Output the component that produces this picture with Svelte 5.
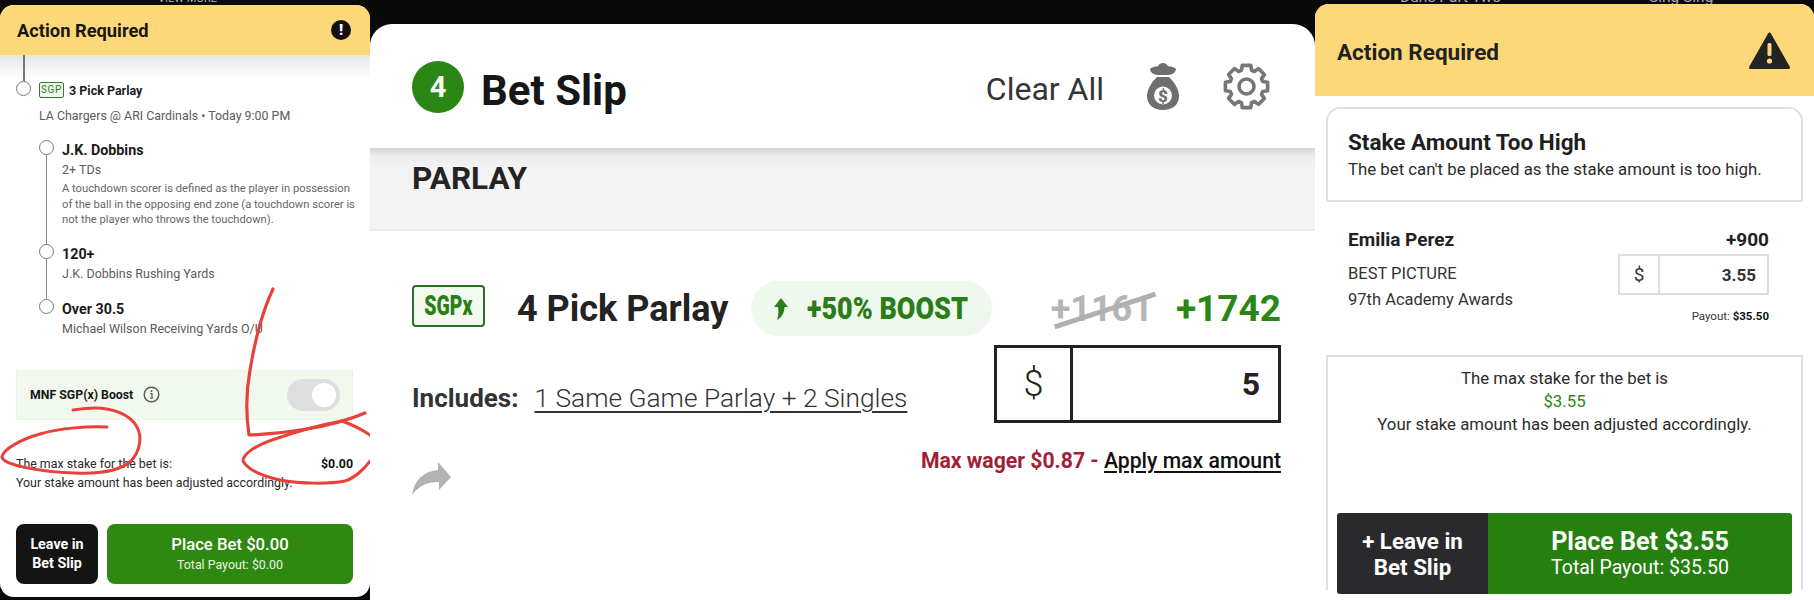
<script>
  const teeth = 8;
  function gearPath() {
    const cx = 23.5, cy = 23.5, ro = 21.5, ri = 17;
    const pts = [];
    for (let i = 0; i < teeth; i++) {
      const a = (i * 2 * Math.PI) / teeth - Math.PI / 2;
      const w = 0.2, s = 0.3;
      const seq = [[ri, a - s], [ro, a - w], [ro, a + w], [ri, a + s]];
      for (const [r, t] of seq) pts.push(`${(cx + r * Math.cos(t)).toFixed(1)} ${(cy + r * Math.sin(t)).toFixed(1)}`);
    }
    return 'M' + pts.join('L') + 'Z';
  }
  const gear = gearPath();
</script>

<div class="page">
  <section class="col left">
    <div class="peek"><span class="peek-a">VIEW MORE</span></div>
    <div class="sheet">
      <header class="alert-head small">
        <h2>Action Required</h2>
        <span class="bang">!</span>
      </header>
      <div class="fade"></div>
      <div class="parlay-row">
        <span class="dot"></span>
        <span class="sgp">SGP</span>
        <strong>3 Pick Parlay</strong>
      </div>
      <p class="matchup">LA Chargers @ ARI Cardinals • Today 9:00 PM</p>
      <div class="legs">
        <div class="leg">
          <div class="rail"><span class="dot"></span></div>
          <div>
            <h3>J.K. Dobbins</h3>
            <p class="leg-sub">2+ TDs</p>
            <p class="leg-desc">A touchdown scorer is defined as the player in possession of the ball in the opposing end zone (a touchdown scorer is not the player who throws the touchdown).</p>
          </div>
        </div>
        <div class="leg">
          <div class="rail"><span class="dot"></span></div>
          <div>
            <h3>120+</h3>
            <p class="leg-sub">J.K. Dobbins Rushing Yards</p>
          </div>
        </div>
        <div class="leg">
          <div class="rail"><span class="dot"></span></div>
          <div>
            <h3>Over 30.5</h3>
            <p class="leg-sub">Michael Wilson Receiving Yards O/U</p>
          </div>
        </div>
      </div>
      <div class="boost-box">
        <strong>MNF SGP(x) Boost</strong>
        <svg class="info" width="17" height="17" viewBox="0 0 17 17">
          <circle cx="8.5" cy="8.5" r="7.3" fill="none" stroke="#555" stroke-width="1.4" />
          <circle cx="8.5" cy="5.2" r="1" fill="#555" />
          <path d="M7.3 7.6h1.7v4.4M7.2 12.2h2.8" fill="none" stroke="#555" stroke-width="1.2" />
        </svg>
        <span class="toggle"><span class="knob"></span></span>
      </div>
      <div class="max-text">
        <p class="max-row"><span>The max stake for the bet is:</span><strong>$0.00</strong></p>
        <p>Your stake amount has been adjusted accordingly.</p>
      </div>
      <div class="left-buttons">
        <button class="leave-l">Leave in<br />Bet Slip</button>
        <button class="place-l"><b>Place Bet $0.00</b><span>Total Payout: $0.00</span></button>
      </div>
      <svg class="scribble" width="370" height="600" viewBox="0 0 370 600" aria-hidden="true">
        <g fill="none" stroke="#e8403a" stroke-linecap="round" stroke-linejoin="round">
          <path stroke-width="3" d="M107 427C90 426 60 428 40 434C22 439 3 449 2 457C3 465 40 472 75 473C100 474 120 470 130 462C141 451 142 436 137 427C130 414 112 408 95 408C88 408 80 409 73 410" />
          <path stroke-width="3.2" d="M273 289C262 312 255 340 250 370C246 392 246 415 249 435C280 434 330 428 365 413" />
          <path stroke-width="3" d="M370 435C360 428 350 424 342 421C325 424 295 432 272 440C255 446 243 454 243 461C248 470 262 476 280 480C300 484 330 484 345 481C355 478 365 468 370 461" />
        </g>
      </svg>
    </div>
  </section>

  <section class="center">
    <header class="slip-head">
      <span class="count">4</span>
      <h1>Bet Slip</h1>
      <span class="clear">Clear All</span>
      <svg class="bag" width="32" height="47" viewBox="0 0 32 47">
        <path fill="#6e6e6e" d="M3 6C6 3 9 4 11 3C13 -1 19 -1 21 3C23 4 26 3 29 6C29 9 25 12 21 12H11C7 12 3 9 3 6Z" />
        <path fill="#6e6e6e" d="M10 14H22C27 19 32 26 32 33C32 42 25 47 16 47C7 47 0 42 0 33C0 26 5 19 10 14Z" />
        <circle cx="16" cy="32.500" r="9" fill="#fff" />
        <text x="16" y="38.500" text-anchor="middle" class="bag-dollar">$</text>
      </svg>
      <svg class="gear" width="47" height="47" viewBox="0 0 47 47">
        <path d={gear} fill="none" stroke="#777" stroke-width="3.6" stroke-linejoin="round" />
        <circle cx="23.500" cy="23.500" r="7.500" fill="none" stroke="#777" stroke-width="3.600" />
      </svg>
    </header>
    <div class="band"><h2>PARLAY</h2></div>
    <div class="slip-body">
      <div class="pick-row">
        <span class="sgpx"><span>SGPx</span></span>
        <h3>4 Pick Parlay</h3>
        <span class="pill">
          <svg width="15" height="22" viewBox="0 0 15 22">
            <path fill="#2a7d18" d="M8 0L15 9H11.500C11.500 14 9.500 19 4 22C6 17 5.500 12 5 9H1Z" />
          </svg>
          <span class="pill-text">+50% BOOST</span>
        </span>
        <span class="old-odds">+1161</span>
        <span class="new-odds">+1742</span>
      </div>
      <div class="includes-row">
        <p class="includes"><strong>Includes:</strong><u>1 Same Game Parlay + 2 Singles</u></p>
        <div class="stake">
          <span class="cur">$</span>
          <span class="val">5</span>
        </div>
      </div>
      <div class="wager-row">
        <svg width="39" height="33" viewBox="0 0 39 33">
          <path fill="#b3b3b3" d="M39 15L26 0V8C12 9 2 18 0 33C7 24 14 20 27 20V28Z" />
        </svg>
        <p class="wager">Max wager $0.87 - <u>Apply max amount</u></p>
      </div>
    </div>
  </section>

  <section class="col right">
    <div class="peek tall"><span class="peek-b">Dune Part Two</span><span class="peek-c">Sing Sing</span></div>
    <div class="sheet flat">
      <header class="alert-head large">
        <h2>Action Required</h2>
        <svg width="41" height="37" viewBox="0 0 41 37">
          <path fill="#232323" stroke="#232323" stroke-width="3" stroke-linejoin="round" d="M20.500 2L39.500 35.500H1.500Z" />
          <rect x="18.500" y="11" width="4" height="13" rx="1.500" fill="#fdd878" />
          <circle cx="20.500" cy="29" r="2.600" fill="#fdd878" />
        </svg>
      </header>
      <div class="too-high">
        <h3>Stake Amount Too High</h3>
        <p>The bet can't be placed as the stake amount is too high.</p>
      </div>
      <div class="bet">
        <div class="bet-top"><strong>Emilia Perez</strong><strong>+900</strong></div>
        <div class="bet-mid">
          <div class="bet-info">
            <p>BEST PICTURE</p>
            <p>97th Academy Awards</p>
          </div>
          <div class="mini-stake"><span class="mini-cur">$</span><span class="mini-val">3.55</span></div>
        </div>
        <p class="payout">Payout: <b>$35.50</b></p>
      </div>
      <div class="max-card">
        <p>The max stake for the bet is</p>
        <p class="green">$3.55</p>
        <p>Your stake amount has been adjusted accordingly.</p>
        <div class="right-buttons">
          <button class="leave-r">+ Leave in<br />Bet Slip</button>
          <button class="place-r"><b>Place Bet $3.55</b><span>Total Payout: $35.50</span></button>
        </div>
      </div>
    </div>
  </section>
</div>

<style>
  :global(body) { margin: 0; background: #0a0a0a; }
  * { box-sizing: border-box; }
  p, h1, h2, h3 { margin: 0; }
  .page {
    display: flex;
    width: 1814px;
    height: 600px;
    overflow: hidden;
    background: #0a0a0a;
    font-family: Roboto, "Liberation Sans", sans-serif;
    color: #1c1c1c;
  }
  .col { display: flex; flex-direction: column; flex: none; }
  .left { width: 370px; }
  .right { width: 499px; }
  .center {
    width: 945px;
    flex: none;
    margin-top: 24px;
    background: #fff;
    border-radius: 22px 22px 0 0;
    overflow: hidden;
  }
  .peek { height: 5px; overflow: hidden; color: #b0b0b0; font-size: 11px; white-space: nowrap; }
  .peek.tall { height: 4px; font-size: 15.500px; line-height: 18px; color: #a8a8a8; }
  .peek-a { display: block; margin: -8px 0 0 158px; line-height: 13px; }
  .peek-b, .peek-c { display: inline-block; margin-top: -12px; vertical-align: top; }
  .peek-b { margin-left: 85px; }
  .peek-c { margin-left: 148px; }
  .sheet {
    position: relative;
    background: #fff;
    border-radius: 14px;
    height: 592px;
    overflow: hidden;
  }
  .sheet.flat { flex: 1; height: auto; border-radius: 14px 14px 0 0; }

  .alert-head {
    display: flex;
    align-items: center;
    justify-content: space-between;
    background: #fdd878;
  }
  .alert-head.small { height: 50px; padding: 0 19px 0 17px; }
  .alert-head.small h2 { font-size: 18.300px; font-weight: 700; color: #161616; }
  .alert-head.large { height: 92px; padding: 0 24px 0 22px; }
  .alert-head.large h2 { font-size: 22.500px; font-weight: 700; color: #222; margin-top: 3px; }
  .bang {
    width: 20px; height: 20px; border-radius: 50%;
    background: #111; color: #fff;
    display: flex; align-items: center; justify-content: center;
    font-size: 15px; font-weight: 900;
  }
  .fade {
    height: 24px;
    margin-bottom: -24px;
    background: linear-gradient(#e6e6e6, #fff);
  }
  .dot {
    display: block;
    width: 15px; height: 15px; border-radius: 50%;
    border: 1.4px solid #777; background: #fff;
    position: relative;
    flex: none;
  }
  .parlay-row {
    position: relative;
    display: flex;
    align-items: center;
    height: 18px;
    margin-top: 26px;
    padding-left: 16px;
    font-size: 12.500px;
  }
  .parlay-row::before {
    content: "";
    position: absolute;
    left: 23px; top: -26px;
    width: 1.500px; height: 26px;
    background: #777;
  }
  .parlay-row .dot { margin-top: -4px; }
  .sgp {
    margin-left: 8px; width: 25px; height: 16px;
    border: 1px solid #3a7a30; background: #f3faf0; border-radius: 2px;
    color: #2f7a22; font-size: 10px; line-height: 14px; text-align: center;
    letter-spacing: .7px;
    margin-right: 5px;
  }
  .matchup { margin: 9px 0 0 39px; font-size: 12.400px; line-height: 16px; color: #5b5b5b; }
  .legs { margin: 16px 16px 0 39px; display: flex; flex-direction: column; gap: 17px; }
  .leg { display: grid; grid-template-columns: 15px 1fr; column-gap: 8px; position: relative; }
  .leg:not(:last-child) .rail::after {
    content: "";
    position: absolute;
    left: 6.500px; top: 8px; bottom: -20px;
    width: 1.500px;
    background: #8a8a8a;
  }
  .rail .dot { z-index: 1; }
  .leg h3 { font-size: 14.300px; line-height: 18px; font-weight: 700; color: #1b1b1b; margin-top: 1px; }
  .leg-sub { font-size: 12.500px; line-height: 16px; margin-top: 3px; color: #5b5b5b; }
  .leg-desc { font-size: 11.200px; line-height: 15.500px; margin-top: 3px; color: #666; width: 296px; }
  .leg:nth-child(2) { margin-top: -1px; }
  .boost-box {
    position: relative;
    display: flex; align-items: center;
    width: 337px; height: 50px;
    margin: 33px 0 0 16px;
    padding: 0 12px 0 13px;
    background: #f1f9ee;
    font-size: 12.300px;
    border: 1px solid #eaf4e6;
  }
  .boost-box strong { font-weight: 700; color: #161616; }
  .info { margin-left: 10px; }
  .toggle {
    margin-left: auto; width: 53px; height: 32px; border-radius: 16px;
    background: #dedede; display: flex; align-items: center; justify-content: flex-end;
    padding-right: 4px;
  }
  .knob { width: 24px; height: 24px; border-radius: 50%; background: #fff; }
  .max-text {
    margin: 34px 17px 0 16px;
    font-size: 12.400px; line-height: 19px; color: #2a2a2a;
  }
  .max-row { display: flex; justify-content: space-between; }
  .max-row strong { color: #111; font-weight: 700; }
  .left-buttons { display: flex; gap: 9px; margin: 32px 17px 0 16px; height: 60px; }
  button { border: 0; color: #fff; font-family: inherit; padding: 0; }
  .leave-l { width: 82px; background: #141414; border-radius: 8px; font-size: 14.300px; font-weight: 700; line-height: 18.500px; }
  .place-l {
    flex: 1; background: #2f880f; border-radius: 8px;
    display: flex; flex-direction: column; align-items: center; justify-content: center;
  }
  .place-l b { font-size: 16.700px; font-weight: 500; line-height: 22px; }
  .place-l span { font-size: 12.400px; line-height: 18px; color: #e8f3e2; }
  .scribble { position: absolute; left: 0; top: -5px; pointer-events: none; }

  .slip-head {
    height: 124px;
    display: flex; align-items: center;
    padding: 0 45px 2px 42px;
  }
  .count {
    width: 52px; height: 52px; border-radius: 50%;
    background: #2a8715; color: #f4faf1;
    display: flex; align-items: center; justify-content: center;
    font-size: 29px; font-weight: 700;
    margin-top: 4px;
  }
  .slip-head h1 { margin: 10px 0 0 17px; font-size: 42px; font-weight: 700; color: #161616; }
  .clear { margin-left: auto; font-size: 32px; color: #343434; margin-top: 8px; }
  .bag { margin-left: 43px; margin-top: 2px; }
  .bag-dollar { font-size: 17px; font-weight: 900; fill: #6e6e6e; font-family: Roboto, sans-serif; }
  .gear { margin-left: 44px; margin-top: 2px; }
  .band {
    height: 83px;
    background: linear-gradient(#d4d4d4 0, #ececec 8px, #f3f3f3 20px);
    border-bottom: 2px solid #ebebeb;
    padding: 12px 42px 0;
  }
  .band h2 { font-size: 31.500px; line-height: 38px; font-weight: 700; color: #232323; }
  .slip-body { padding: 50px 34px 0 42px; }
  .pick-row { display: flex; align-items: center; height: 55px; }
  .sgpx {
    width: 73px; height: 42px;
    border: 2.500px solid #2e6f28; border-radius: 4px; background: #f2f9ee;
    display: flex; align-items: center; justify-content: center;
    margin-top: -6px;
  }
  .sgpx span {
    color: #2a7d18; font-size: 27px; font-weight: 900;
    display: inline-block; transform: scaleX(.72); white-space: nowrap;
  }
  .pick-row h3 { margin-left: 32px; font-size: 36px; font-weight: 700; color: #232323; white-space: nowrap; }
  .pill {
    margin-left: 23px; width: 241px; height: 55px; border-radius: 28px;
    background: #eff8ec;
    display: flex; align-items: center;
    padding-left: 22px;
    flex: none;
  }
  .pill-text {
    display: inline-block;
    margin-left: 19px;
    color: #2a7d18; font-size: 31px; font-weight: 900;
    white-space: nowrap;
    transform: scaleX(.87); transform-origin: left center;
  }
  .old-odds {
    position: relative;
    margin-left: auto;
    font-size: 36px; font-weight: 700; color: #b5b5b5;
    white-space: nowrap;
  }
  .old-odds::after {
    content: "";
    position: absolute;
    left: 1px; top: 20px;
    width: 106px; height: 4.500px;
    background: #b0b0b0;
    transform: rotate(-18deg);
  }
  .new-odds { margin-left: 23px; font-size: 37px; font-weight: 700; color: #2a8715; }
  .includes-row { display: flex; justify-content: space-between; margin-top: 9px; height: 78px; }
  .includes { margin-top: 40px; font-size: 26px; line-height: 26px; color: #333; white-space: nowrap; }
  .includes strong { font-weight: 700; }
  .includes u { margin-left: 16px; font-size: 26.300px; font-weight: 300; text-underline-offset: 4px; text-decoration-thickness: 2px; }
  .stake {
    width: 287px; height: 78px;
    border: 3px solid #222;
    display: flex; color: #222;
  }
  .cur {
    width: 76px; border-right: 3px solid #222;
    display: flex; align-items: center; justify-content: center;
    font-size: 36px; font-weight: 300;
  }
  .val {
    flex: 1; display: flex; align-items: center; justify-content: flex-end;
    padding-right: 18px; font-size: 32px; font-weight: 700;
  }
  .wager-row { display: flex; justify-content: space-between; align-items: flex-start; margin-top: 26px; }
  .wager-row svg { margin-top: 13px; }
  .wager { font-size: 21.200px; line-height: 24px; font-weight: 700; color: #a31d35; }
  .wager u { color: #111; font-weight: 500; text-underline-offset: 3px; }

  .too-high {
    margin: 11px 11px 0 11px;
    height: 95px;
    border: 2px solid #e1e1e1;
    border-radius: 14px 14px 2px 2px;
    padding: 19px 20px 0;
  }
  .too-high h3 { font-size: 22.500px; line-height: 28px; font-weight: 700; color: #1e1e1e; }
  .too-high p { font-size: 16.800px; line-height: 20px; margin-top: 3px; color: #2b2b2b; }
  .bet { padding: 27px 45px 0 33px; }
  .bet-top { display: flex; justify-content: space-between; font-size: 19px; line-height: 22px; color: #222; }
  .bet-top strong { font-weight: 700; }
  .bet-mid { display: flex; justify-content: space-between; margin-top: 3px; }
  .bet-info { font-size: 16.500px; line-height: 26px; color: #333; padding-top: 7px; height: 41px; }
  .mini-stake { width: 151px; height: 41px; border: 2px solid #dcdcdc; display: flex; color: #333; }
  .mini-cur { width: 40px; border-right: 2px solid #dcdcdc; display: flex; align-items: center; justify-content: center; font-size: 19px; font-weight: 400; }
  .mini-val { flex: 1; display: flex; align-items: center; justify-content: flex-end; padding-right: 11px; font-size: 17px; font-weight: 700; }
  .payout { text-align: right; font-size: 11.500px; line-height: 14px; margin-top: 14px; color: #333; }
  .payout b { color: #111; }
  .max-card {
    margin: 32px 11px 0;
    height: 235px;
    border: 2px solid #e1e1e1;
    border-bottom: 0;
    padding-top: 10px;
    text-align: center;
    font-size: 16.800px; line-height: 23px; color: #2b2b2b;
  }
  .green { color: #2a8715; }
  .right-buttons { display: flex; margin: 77px 9px 0; height: 81px; border-radius: 3px; overflow: hidden; }
  .leave-r { width: 151px; background: #2a2a2c; font-size: 22.300px; line-height: 26px; font-weight: 700; }
  .place-r {
    flex: 1; background: #26800f;
    display: flex; flex-direction: column; align-items: center; justify-content: center;
  }
  .place-r b { font-size: 25px; font-weight: 700; line-height: 28px; }
  .place-r span { font-size: 19.500px; line-height: 23px; font-weight: 400; }
</style>
